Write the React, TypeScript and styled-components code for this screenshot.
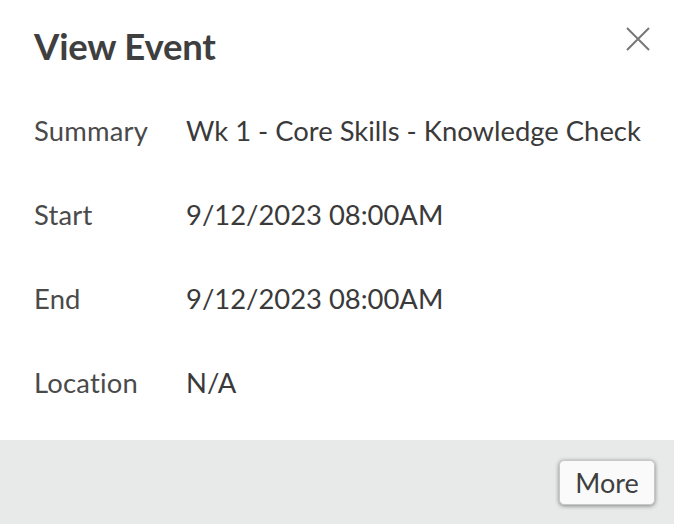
import { Fragment } from 'react';
import styled, { createGlobalStyle } from 'styled-components';

const GlobalStyle = createGlobalStyle`
  html, body {
    margin: 0;
    padding: 0;
    background: #ffffff;
  }
  body {
    font-family: Lato, "Open Sans", sans-serif;
    color: #404040;
  }
`;

const Dialog = styled.div`
  width: 674px;
  height: 524px;
  display: flex;
  flex-direction: column;
  background: #fff;
`;

const Header = styled.div`
  display: flex;
  justify-content: space-between;
  align-items: flex-start;
  padding: 24px 22px 0 34px;
`;

const Title = styled.h1`
  margin: 0;
  font-size: 36.5px;
  font-weight: 700;
  line-height: 44px;
  color: #3f3f3f;
  letter-spacing: -0.2px;
`;

const CloseButton = styled.button`
  border: none;
  background: none;
  padding: 0;
  margin-top: 1px;
  width: 28px;
  height: 28px;
  cursor: pointer;
  display: flex;
  align-items: center;
  justify-content: center;
`;

const Body = styled.div`
  flex: 1;
  display: grid;
  grid-template-columns: 152px 1fr;
  grid-auto-rows: 84px;
  align-items: center;
  align-content: start;
  padding: 20px 0 0 34px;
`;

const Label = styled.div`
  font-size: 27.4px;
  letter-spacing: 0.2px;
  color: #4a4a4a;
`;

const Value = styled.div`
  font-size: 27.4px;
  color: #3a3a3a;
  white-space: nowrap;
`;

const Footer = styled.div`
  flex-shrink: 0;
  height: 84px;
  background: #e8e9e9;
  display: flex;
  justify-content: flex-end;
  align-items: center;
  padding-right: 19px;
  box-sizing: border-box;
`;

const MoreButton = styled.button`
  font-family: Lato, "Open Sans", sans-serif;
  font-size: 27px;
  color: #3f3f3f;
  background: #fafafa;
  border: 1px solid #c8c8c8;
  border-radius: 5px;
  width: 96px;
  height: 45px;
  padding: 0;
  box-shadow: 0 1px 4px rgba(0, 0, 0, 0.45);
  cursor: pointer;
`;

const rows = [
  { label: 'Summary', value: 'Wk 1 - Core Skills - Knowledge Check' },
  { label: 'Start', value: '9/12/2023 08:00AM' },
  { label: 'End', value: '9/12/2023 08:00AM' },
  { label: 'Location', value: 'N/A' },
];

export default function App() {
  return (
    <>
      <GlobalStyle />
      <Dialog>
        <Header>
          <Title>View Event</Title>
          <CloseButton aria-label="Close">
            <svg width="26" height="26" viewBox="0 0 26 26">
              <path d="M2 2 L24 24 M24 2 L2 24" stroke="#777" strokeWidth="2" />
            </svg>
          </CloseButton>
        </Header>
        <Body>
          {rows.map((row) => (
            <Fragment key={row.label}>
              <Label>{row.label}</Label>
              <Value>{row.value}</Value>
            </Fragment>
          ))}
        </Body>
        <Footer>
          <MoreButton>More</MoreButton>
        </Footer>
      </Dialog>
    </>
  );
}
